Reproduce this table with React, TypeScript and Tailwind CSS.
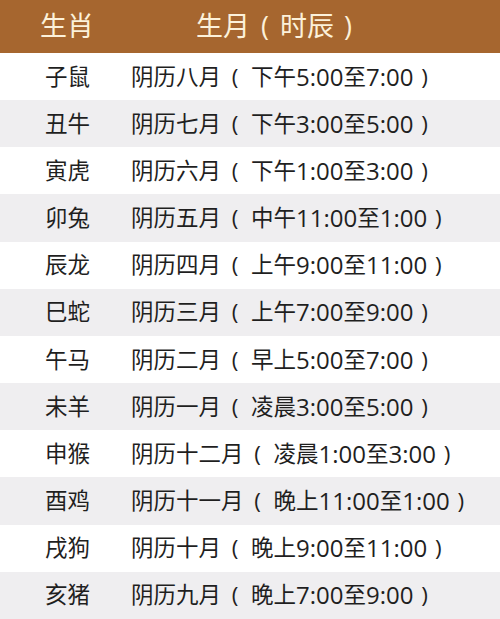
const rows = [
  ['子鼠', '阴历八月（下午5:00至7:00）'],
  ['丑牛', '阴历七月（下午3:00至5:00）'],
  ['寅虎', '阴历六月（下午1:00至3:00）'],
  ['卯兔', '阴历五月（中午11:00至1:00）'],
  ['辰龙', '阴历四月（上午9:00至11:00）'],
  ['巳蛇', '阴历三月（上午7:00至9:00）'],
  ['午马', '阴历二月（早上5:00至7:00）'],
  ['未羊', '阴历一月（凌晨3:00至5:00）'],
  ['申猴', '阴历十二月（凌晨1:00至3:00）'],
  ['酉鸡', '阴历十一月（晚上11:00至1:00）'],
  ['戌狗', '阴历十月（晚上9:00至11:00）'],
  ['亥猪', '阴历九月（晚上7:00至9:00）'],
];

// parens get their own wide cell, digits a wider latin face
function Cell({ text, header }: { text: string; header?: boolean }) {
  const parts = text.split(/(（|）|[0-9:]+)/).filter(Boolean);
  return (
    <div className="flex items-center whitespace-nowrap">
      {parts.map((p, i) => {
        if (p === '（')
          return (
            <span key={i} className={`inline-block text-center ${header ? 'w-[30px]' : 'w-[30px] pr-[2px]'}`}>
              (
            </span>
          );
        if (p === '）')
          return (
            <span key={i} className={`inline-block text-center ${header ? 'w-[28px]' : 'w-[22px]'}`}>
              )
            </span>
          );
        if (/^[0-9:]+$/.test(p))
          return (
            <span key={i} className="text-[24px] leading-none">
              {p}
            </span>
          );
        return <span key={i}>{p}</span>;
      })}
    </div>
  );
}

export default function App() {
  return (
    <div
      className="w-[500px] h-[619px] overflow-hidden bg-white"
      style={{ fontFamily: '"Open Sans", "Noto Sans CJK SC", sans-serif' }}
    >
      {/* header */}
      <div className="h-[53px] flex items-center bg-[#a6662f] text-[#fcf1da] text-[27px]">
        <div className="w-[196px] pl-[40px]">生肖</div>
        <Cell text="生月（时辰）" header />
      </div>

      {rows.map(([animal, month], i) => (
        <div
          key={animal}
          className={`h-[47.17px] flex items-center text-[22.5px] text-[#1f1f1f] ${
            i % 2 === 1 ? 'bg-[#efeef0]' : 'bg-white'
          }`}
        >
          <div className="w-[131px] pl-[45px]">{animal}</div>
          <Cell text={month} />
        </div>
      ))}
    </div>
  );
}
